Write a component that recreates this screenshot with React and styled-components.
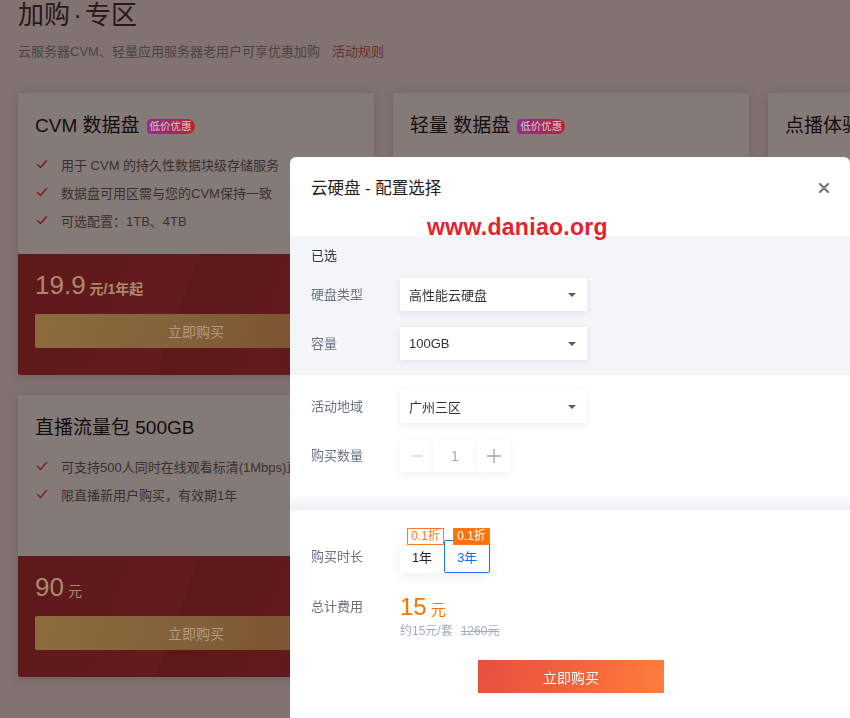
import React from "react";
import styled, { createGlobalStyle } from "styled-components";

const GlobalStyle = createGlobalStyle`
  html, body {
    margin: 0;
    padding: 0;
    overflow: hidden;
    background: #807371;
  }
  body {
    font-family: "Liberation Sans", "Noto Sans CJK SC", sans-serif;
    width: 850px;
    height: 718px;
  }
  * { box-sizing: border-box; }
`;

const Page = styled.div`
  padding: 0 0 0 18px;
  width: 1200px;
  height: 718px;
  background: #807371;
`;

const Title = styled.h1`
  margin: 0;
  font-size: 26px;
  line-height: 30px;
  font-weight: 400;
  color: #2a1818;
  word-spacing: -4px;
`;

const Sub = styled.p`
  margin: 12px 0 0;
  font-size: 13px;
  line-height: 20px;
  color: #4d4240;
`;

const RuleLink = styled.span`
  margin-left: 12px;
  color: #6e2b2a;
`;

const Grid = styled.div`
  margin-top: 31px;
  display: grid;
  grid-template-columns: repeat(3, 356px);
  grid-auto-rows: 282px;
  column-gap: 19px;
  row-gap: 20px;
`;

const Card = styled.div`
  background: #847a78;
  border-radius: 2px;
  box-shadow: 0 2px 10px rgba(60, 40, 38, 0.25);
  display: flex;
  flex-direction: column;
  overflow: hidden;
`;

const CardTitle = styled.h2`
  margin: 19px 0 0 17px;
  font-size: 19px;
  line-height: 28px;
  font-weight: 400;
  color: #150d0d;
  display: flex;
  align-items: center;
`;

const Badge = styled.span`
  margin-left: 7px;
  height: 15px;
  padding: 0 3px;
  border-radius: 4px 8px 8px 4px;
  background: linear-gradient(90deg, #8a338f, #b42630);
  color: #dcc2cb;
  font-size: 10.5px;
  line-height: 15px;
`;

const List = styled.ul`
  list-style: none;
  margin: 10px 0 0;
  padding: 0 0 0 18px;
`;

const Item = styled.li`
  display: flex;
  align-items: center;
  height: 28px;
  font-size: 13px;
  color: #3a302f;
  white-space: nowrap;
`;

const Check = styled.svg`
  width: 12px;
  height: 12px;
  margin-right: 13px;
  flex: none;
`;

const Band = styled.div`
  margin-top: auto;
  height: 121px;
  padding: 16px 17px 0;
  background: linear-gradient(110deg, #5f191b 0%, #631b1d 45%, #5d181a 46%, #621a1c 70%, #5f191b 100%);
`;

const Price = styled.div`
  display: flex;
  align-items: baseline;
  color: #ab8a6b;
  height: 30px;
`;

const PriceNum = styled.span`
  font-size: 26px;
  line-height: 30px;
`;

const PriceUnit = styled.span`
  margin-left: 4px;
  font-size: 14px;
  font-weight: ${(p) => (p.$bold ? 700 : 400)};
`;

const GoldButton = styled.div`
  margin-top: 14px;
  height: 34px;
  border-radius: 2px;
  background: linear-gradient(100deg, #8c6c3e 0%, #82603a 50%, #7a4c24 100%);
  color: #b39c80;
  font-size: 14px;
  display: flex;
  align-items: center;
  justify-content: center;
`;

/* ---------- Modal ---------- */

const Modal = styled.div`
  position: fixed;
  left: 290px;
  top: 157px;
  width: 560px;
  height: 600px;
  background: #fff;
  border-radius: 6px 6px 0 0;
  color: #333;
`;

const ModalHeader = styled.div`
  height: 79px;
  padding: 20px 0 0 21px;
  display: flex;
  justify-content: space-between;
`;

const ModalTitle = styled.div`
  font-size: 16.5px;
  line-height: 22px;
  color: #222;
`;

const Close = styled.svg`
  width: 10px;
  height: 10px;
  margin: 6px 21px 0 0;
`;

const Watermark = styled.div`
  position: absolute;
  left: 137px;
  top: 55px;
  font-family: "Liberation Sans", sans-serif;
  font-weight: 700;
  font-size: 23px;
  line-height: 30px;
  color: #e8222c;
  letter-spacing: 0.3px;
`;

const Section = styled.div`
  background: ${(p) => (p.$grey ? "#f3f5f9" : "#fff")};
  padding: ${(p) => p.$pad};
  display: flex;
  flex-direction: column;
`;

const Picked = styled.div`
  font-size: 13px;
  line-height: 20px;
  color: #333;
`;

const Row = styled.div`
  display: flex;
  align-items: ${(p) => (p.$top ? "flex-start" : "center")};
  margin-top: ${(p) => p.$mt || 0}px;
`;

const Label = styled.div`
  width: 89px;
  flex: none;
  font-size: 13px;
  line-height: 20px;
  color: #6a7282;
  margin-top: ${(p) => p.$mt || 0}px;
`;

const Select = styled.div`
  width: 187px;
  height: 33px;
  background: #fff;
  box-shadow: 0 2px 7px rgba(30, 50, 90, 0.09);
  display: flex;
  align-items: center;
  justify-content: space-between;
  padding: 0 11px 0 9px;
  font-size: 13px;
  color: #333;
`;

const Caret = styled.span`
  width: 0;
  height: 0;
  border-left: 4px solid transparent;
  border-right: 4px solid transparent;
  border-top: 4px solid #555b66;
`;

const Stepper = styled.div`
  display: flex;
`;

const StepBox = styled.div`
  width: ${(p) => p.$w}px;
  height: 33px;
  background: #fff;
  box-shadow: 0 2px 8px rgba(30, 50, 90, 0.07);
  display: flex;
  align-items: center;
  justify-content: center;
  font-size: 14px;
  color: #a3abb8;
`;

const Fade = styled.div`
  height: 15px;
  background: linear-gradient(180deg, #ffffff 0%, #eceff5 100%);
`;

const Tabs = styled.div`
  display: flex;
  box-shadow: 0 3px 12px rgba(30, 50, 90, 0.08);
`;

const Tab = styled.div`
  position: relative;
  width: ${(p) => p.$w}px;
  height: 33px;
  display: flex;
  align-items: center;
  justify-content: center;
  font-size: 13px;
  background: #fff;
  color: ${(p) => (p.$active ? "#0d6bf0" : "#222")};
  border: 1px solid ${(p) => (p.$active ? "#1f6fe8" : "transparent")};
  border-radius: 2px;
`;

const Discount = styled.span`
  position: absolute;
  top: -13px;
  right: -1px;
  width: 37px;
  height: 17px;
  font-size: 12px;
  line-height: 15px;
  text-align: center;
  border: 1px solid #ff7a1f;
  background: ${(p) => (p.$filled ? "#ff7200" : "#fff")};
  color: ${(p) => (p.$filled ? "#fff" : "#ff7a1f")};
`;

const Total = styled.div`
  display: flex;
  flex-direction: column;
`;

const TotalPrice = styled.div`
  color: #ff7200;
  display: flex;
  align-items: baseline;
  height: 26px;
`;

const TotalNum = styled.span`
  font-size: 24px;
  line-height: 26px;
`;

const TotalUnit = styled.span`
  margin-left: 4px;
  font-size: 15px;
`;

const Note = styled.div`
  margin-top: 2px;
  font-size: 12px;
  line-height: 18px;
  color: #a3abb8;
`;

const Strike = styled.span`
  margin-left: 8px;
  text-decoration: line-through;
`;

const BuyButton = styled.div`
  align-self: center;
  margin: 20px 0 0 -19px;
  width: 186px;
  height: 33px;
  background: linear-gradient(100deg, #e8503f 0%, #f2603c 45%, #ff7d3b 100%);
  color: #fff;
  font-size: 14px;
  display: flex;
  align-items: center;
  justify-content: center;
`;

const CheckIcon = () => (
  <Check viewBox="0 0 12 12">
    <polyline points="1.5,6.5 4.5,9.5 10.5,2.5" fill="none" stroke="#7c2227" strokeWidth="1.6" strokeLinecap="round" strokeLinejoin="round" />
  </Check>
);

const cards = [
  {
    title: "CVM 数据盘",
    badge: true,
    items: ["用于 CVM 的持久性数据块级存储服务", "数据盘可用区需与您的CVM保持一致", "可选配置：1TB、4TB"],
    price: "19.9",
    unit: "元/1年起",
    bold: true,
  },
  {
    title: "轻量 数据盘",
    badge: true,
    items: ["用于轻量应用服务器的数据盘", "数据盘地域需与轻量服务器一致", "可选配置：100GB、500GB"],
    price: "19.9",
    unit: "元/1年起",
    bold: true,
  },
  {
    title: "点播体验包",
    badge: false,
    items: ["点播存储与流量体验包", "限点播新用户购买"],
    price: "9.9",
    unit: "元",
  },
  {
    title: "直播流量包 500GB",
    badge: false,
    items: ["可支持500人同时在线观看标清(1Mbps)直播", "限直播新用户购买，有效期1年"],
    price: "90",
    unit: "元",
  },
];

export default function App() {
  return (
    <>
      <GlobalStyle />
      <Page>
        <Title>加购 · 专区</Title>
        <Sub>
          云服务器CVM、轻量应用服务器老用户可享优惠加购
          <RuleLink>活动规则</RuleLink>
        </Sub>
        <Grid>
          {cards.map((c) => (
            <Card key={c.title}>
              <CardTitle>
                {c.title}
                {c.badge && <Badge>低价优惠</Badge>}
              </CardTitle>
              <List>
                {c.items.map((t) => (
                  <Item key={t}>
                    <CheckIcon />
                    {t}
                  </Item>
                ))}
              </List>
              <Band>
                <Price>
                  <PriceNum>{c.price}</PriceNum>
                  <PriceUnit $bold={c.bold}>{c.unit}</PriceUnit>
                </Price>
                <GoldButton>立即购买</GoldButton>
              </Band>
            </Card>
          ))}
        </Grid>
      </Page>

      <Modal>
        <ModalHeader>
          <ModalTitle>云硬盘 - 配置选择</ModalTitle>
          <Close viewBox="0 0 10 10">
            <path d="M1 1L9 9M9 1L1 9" stroke="#666" strokeWidth="1.8" strokeLinecap="round" />
          </Close>
        </ModalHeader>
        <Watermark>www.daniao.org</Watermark>

        <Section $grey $pad="10px 0 15px 21px">
          <Picked>已选</Picked>
          <Row $mt={12}>
            <Label>硬盘类型</Label>
            <Select>
              高性能云硬盘
              <Caret />
            </Select>
          </Row>
          <Row $mt={16}>
            <Label>容量</Label>
            <Select>
              100GB
              <Caret />
            </Select>
          </Row>
        </Section>

        <Section $pad="15px 0 0 21px">
          <Row>
            <Label>活动地域</Label>
            <Select>
              广州三区
              <Caret />
            </Select>
          </Row>
          <Row $mt={16}>
            <Label>购买数量</Label>
            <Stepper>
              <StepBox $w={33}>
                <svg width="12" height="12" viewBox="0 0 12 12">
                  <path d="M0 6H12" stroke="#cdd2da" strokeWidth="1.3" />
                </svg>
              </StepBox>
              <StepBox $w={44}>1</StepBox>
              <StepBox $w={33}>
                <svg width="14" height="14" viewBox="0 0 14 14">
                  <path d="M0 7H14M7 0V14" stroke="#9aa3b2" strokeWidth="1.3" />
                </svg>
              </StepBox>
            </Stepper>
          </Row>
        </Section>
        <Section $pad="23px 0 0 0">
          <Fade />
        </Section>

        <Section $pad="30px 0 0 21px">
          <Row>
            <Label>购买时长</Label>
            <Tabs>
              <Tab $w={44}>
                1年
                <Discount>0.1折</Discount>
              </Tab>
              <Tab $w={46} $active>
                3年
                <Discount $filled>0.1折</Discount>
              </Tab>
            </Tabs>
          </Row>
          <Row $top $mt={21}>
            <Label $mt={3}>总计费用</Label>
            <Total>
              <TotalPrice>
                <TotalNum>15</TotalNum>
                <TotalUnit>元</TotalUnit>
              </TotalPrice>
              <Note>
                约15元/套
                <Strike>1260元</Strike>
              </Note>
            </Total>
          </Row>
          <BuyButton>立即购买</BuyButton>
        </Section>
      </Modal>
    </>
  );
}
